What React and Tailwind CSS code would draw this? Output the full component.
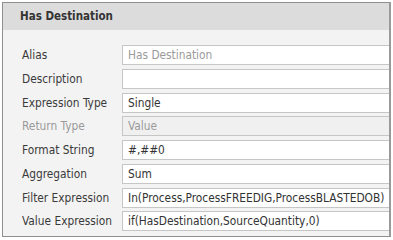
import React from "react";

const rows = [
  { label: "Alias", value: "Has Destination", muted: true },
  { label: "Description", value: "" },
  { label: "Expression Type", value: "Single" },
  { label: "Return Type", value: "Value", disabled: true },
  { label: "Format String", value: "#,##0" },
  { label: "Aggregation", value: "Sum" },
  { label: "Filter Expression", value: "In(Process,ProcessFREEDIG,ProcessBLASTEDOB)" },
  { label: "Value Expression", value: "if(HasDestination,SourceQuantity,0)" },
];

export default function App() {
  return (
    <div
      className="w-[393px] h-[240px] bg-white overflow-hidden"
      style={{ fontFamily: "'DejaVu Sans Condensed', 'DejaVu Sans', sans-serif" }}
    >
      <div className="ml-[2px] mt-[2px] w-[389px] h-[235px] border border-[#8f8f8f] border-r-2 border-r-[#9a9a9a] overflow-hidden flex flex-col">
        <div className="h-[27px] shrink-0 bg-[#dcdcdc] flex items-center pl-[17px] text-[11.5px] font-bold text-[#333]">
          Has Destination
        </div>
        <div className="flex-1 bg-[#f3f3f3] pt-[15px] pl-[19px] flex flex-col gap-[3.75px]">
          {rows.map((r) => (
            <div key={r.label} className="flex items-center h-[20px] pt-[2px]">
              <div
                className={
                  "w-[100px] shrink-0 text-[11.8px] " +
                  (r.disabled ? "text-[#9a9a9a]" : "text-[#3a3a3a]")
                }
              >
                {r.label}
              </div>
              <div
                className={
                  "w-[290px] shrink-0 h-[20px] -mt-[2px] border border-[#c6c6c6] flex items-center pl-[5px] pt-[2px] text-[11.8px] whitespace-nowrap " +
                  (r.disabled ? "bg-[#f0f0f0] " : "bg-white ") +
                  (r.muted || r.disabled ? "text-[#9a9a9a]" : "text-[#333]")
                }
              >
                {r.value}
              </div>
            </div>
          ))}
        </div>
      </div>
    </div>
  );
}
